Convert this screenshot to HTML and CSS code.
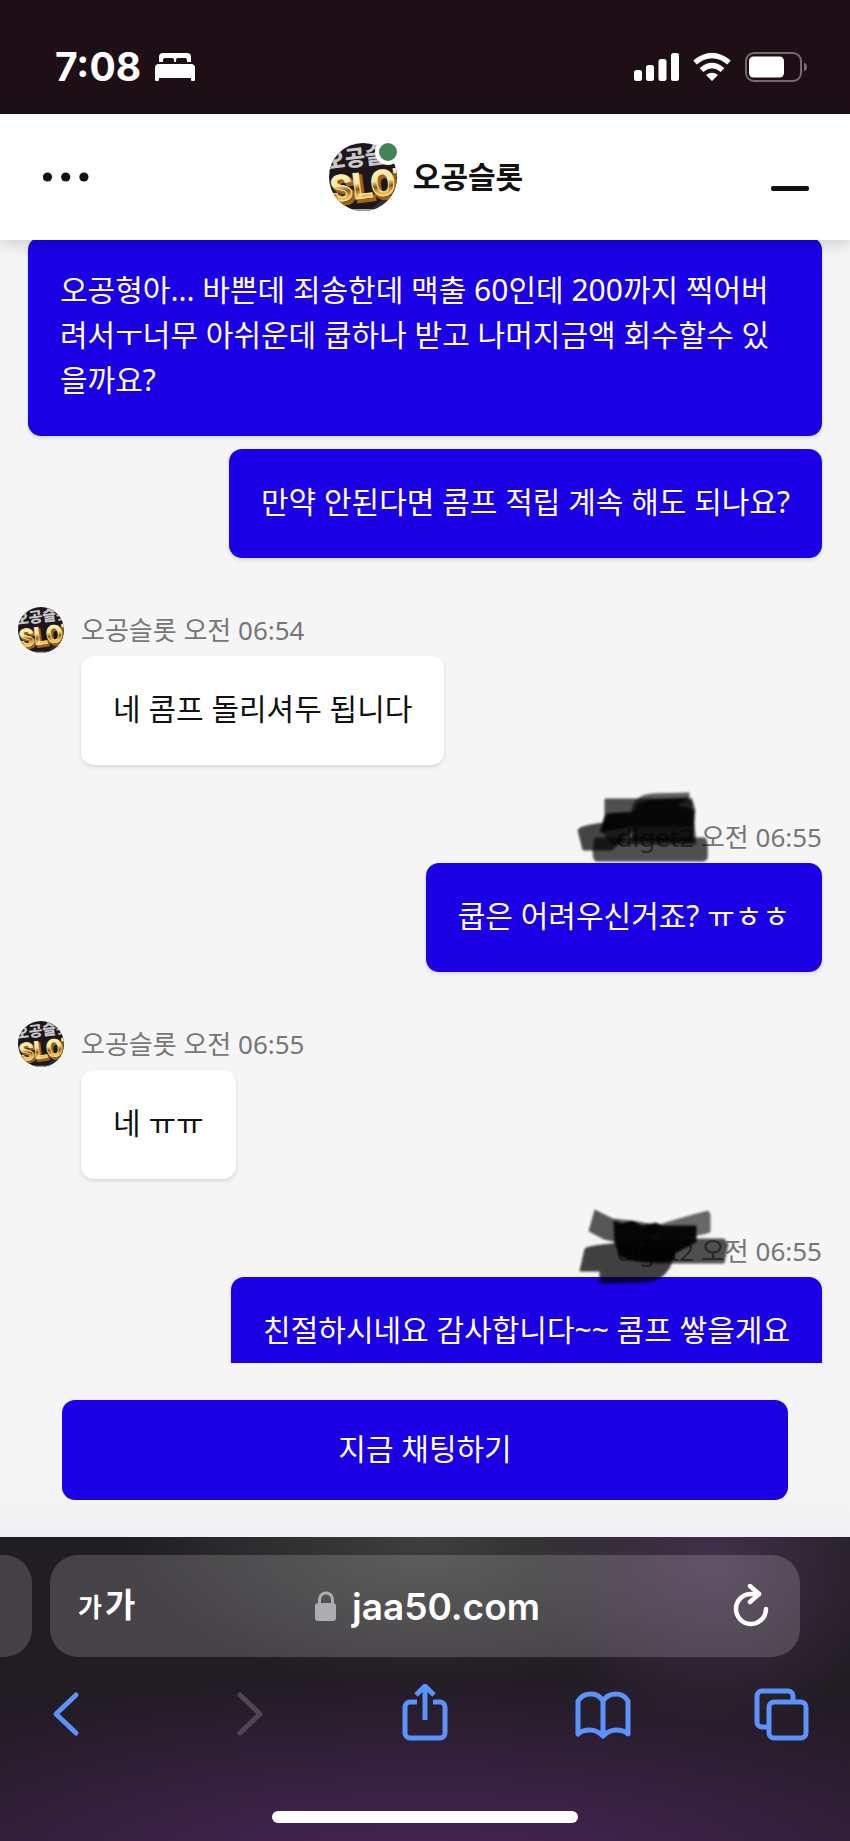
FILE: index.html
```html
<!DOCTYPE html>
<html lang="ko">
<head>
<meta charset="utf-8">
<meta name="viewport" content="width=device-width, initial-scale=1">
<title>오공슬롯</title>
<link rel="stylesheet" href="styles.css">
</head>
<body>
<svg class="defs" aria-hidden="true">
  <defs>
    <linearGradient id="gold" x1="0" y1="0" x2="0" y2="1">
      <stop offset="0" stop-color="#fff6c8"/>
      <stop offset=".42" stop-color="#fbe7a0"/>
      <stop offset=".56" stop-color="#8a5312"/>
      <stop offset=".7" stop-color="#e9b54a"/>
      <stop offset="1" stop-color="#fff0a8"/>
    </linearGradient>
    <clipPath id="round"><circle cx="34" cy="34" r="34"/></clipPath>
    <symbol id="logo" viewBox="0 0 68 68">
      <g clip-path="url(#round)">
        <rect width="68" height="68" fill="#1d171b"/>
        <path d="M40 68 68 44V68z" fill="#30302c"/>
        <path d="M0 30 14 2 0 0z" fill="#3b3a3d"/>
        <g transform="rotate(-7 34 34)">
          <text class="logo-top" x="-2" y="22">오공슬롯</text>
          <text class="logo-shade" x="2" y="58">SLOT</text>
          <text class="logo-word" x="0" y="55">SLOT</text>
        </g>
        <path d="M14 66H54V68H14z" fill="#aaa"/>
      </g>
    </symbol>
  </defs>
</svg>

<div class="status">
  <div class="status-side">
    <span class="clock">7:08</span>
    <svg width="40" height="30" viewBox="0 0 40 30" fill="#fff" aria-hidden="true">
      <path d="M4 10V5a4 4 0 0 1 4-4H32a4 4 0 0 1 4 4V10H32V8a2 2 0 0 0-2-2H23a2 2 0 0 0-2 2V10H19V8a2 2 0 0 0-2-2H10a2 2 0 0 0-2 2V10z"/>
      <path d="M0 28V16a4 4 0 0 1 4-4H36a4 4 0 0 1 4 4V28a1 1 0 0 1-1 1H37a1 1 0 0 1-1-1V26H4V28a1 1 0 0 1-1 1H1a1 1 0 0 1-1-1z"/>
    </svg>
  </div>
  <div class="status-side">
    <svg width="45" height="30" viewBox="0 0 45 30" fill="#fff" aria-hidden="true">
      <rect y="18" width="8" height="11" rx="2.5"/><rect x="12" y="13" width="8" height="16" rx="2.5"/><rect x="24.500" y="7" width="8" height="22" rx="2.500"/><rect x="37" y="1" width="8" height="28" rx="2.500"/>
    </svg>
    <svg width="38" height="30" viewBox="0 0 38 30" fill="none" stroke="#fff" stroke-width="5.500" aria-hidden="true">
      <path d="M2 10.500Q19-3.500 36 10.500"/><path d="M8.500 18Q19 9 29.500 18"/>
      <path d="M13 23Q19 18.500 25 23L19 29z" fill="#fff" stroke="none"/>
    </svg>
    <svg width="62" height="30" viewBox="0 0 62 30" aria-hidden="true">
      <rect x="1" y="1" width="55" height="28" rx="8" fill="none" stroke="#77696f" stroke-width="2"/>
      <rect x="4" y="4.500" width="35" height="21" rx="4.500" fill="#fff"/>
      <path d="M59 10.500Q62 12 62 15T59 19.500z" fill="#77696f"/>
    </svg>
  </div>
</div>

<header class="header">
  <button class="icon-button" type="button" aria-label="메뉴">
    <svg width="46" height="46" viewBox="0 0 46 46" fill="#111"><circle cx="4.500" cy="23" r="4.600"/><circle cx="22.700" cy="23" r="4.600"/><circle cx="40.900" cy="23" r="4.600"/></svg>
  </button>
  <div class="brand">
    <span class="brand-avatar">
      <svg width="68" height="68"><use href="#logo"/></svg>
      <i class="online"></i>
    </span>
    <h1 class="brand-name">오공슬롯</h1>
  </div>
  <button class="icon-button icon-end" type="button" aria-label="최소화">
    <svg width="38" height="46" viewBox="0 0 38 46"><rect y="32" width="38" height="5" rx="2" fill="#111"/></svg>
  </button>
</header>

<main class="chat">
  <section class="group mine">
    <p class="bubble">오공형아... 바쁜데 죄송한데 맥출 60인데 200까지 찍어버려서ㅜ너무 아쉬운데 쿱하나 받고 나머지금액 회수할수 있을까요?</p>
    <p class="bubble next">만약 안된다면 콤프 적립 계속 해도 되나요?</p>
  </section>

  <section class="group">
    <div class="meta"><svg class="avatar" width="46" height="46"><use href="#logo"/></svg><span>오공슬롯 오전 06:54</span></div>
    <p class="bubble">네 콤프 돌리셔두 됩니다</p>
  </section>

  <section class="group mine">
    <div class="meta"><span>diget2 오전 06:55</span>
      <svg class="marker marker-a" width="140" height="74" viewBox="0 0 140 74" aria-hidden="true">
        <path d="M33 9H120V36H30L33 26z" opacity=".68"/>
        <path d="M59 25Q60 5 80 4L117 3V8L121 13 123 20 122 32 124 54H40L31 43Q32 25 42 23z" opacity=".62"/>
        <path d="M34 24 62 22Q65 10 82 10L116 8 104 16 122 20 121 52 60 50 62 36 28 42z" opacity=".8"/>
        <path d="M6 40Q7 36 32 33L64 38 40 60H11z" opacity=".72"/>
        <path d="M23 48H133Q136 50 135 69L132 71H24Q21 70 21 60z" opacity=".68"/>
      </svg>
    </div>
    <p class="bubble">쿱은 어려우신거죠? ㅠㅎㅎ</p>
  </section>

  <section class="group">
    <div class="meta"><svg class="avatar" width="46" height="46"><use href="#logo"/></svg><span>오공슬롯 오전 06:55</span></div>
    <p class="bubble">네 ㅠㅠ</p>
  </section>

  <section class="group mine">
    <div class="meta"><span>diget2 오전 06:55</span>
      <svg class="marker marker-b" width="160" height="80" viewBox="0 0 160 80" aria-hidden="true">
        <path d="M23 4Q30 8 41 13L66 16 88 20 75 38Q50 38 32 33L17 25z" opacity=".65"/>
        <path d="M72 24Q98 15 136 5L138 8 138 26Q128 30 92 33z" opacity=".58"/>
        <path d="M42 15 50 18 60 15 70 20 84 17 90 20H124V36L103 47 101 54Q70 60 48 50L43 37z" opacity=".94"/>
        <path d="M70 33H152L156 38 152 57H84z" opacity=".68"/>
        <path d="M13 43Q14 40 50 37L102 44Q101 66 84 74 74 77 28 77V65H8z" opacity=".74"/>
      </svg>
    </div>
    <p class="bubble">친절하시네요 감사합니다~~ 콤프 쌓을게요</p>
  </section>
</main>

<div class="action">
  <button class="start" type="button">지금 채팅하기</button>
</div>

<footer class="browser">
  <div class="tabs">
    <div class="tab-previous"></div>
    <div class="address">
      <button class="text-size" type="button" aria-label="텍스트 크기"><small>가</small>가</button>
      <a class="url" href="#">
        <svg width="22" height="32" viewBox="0 0 22 32" aria-hidden="true"><path d="M4.500 14V9.500a6.500 6.500 0 0 1 13 0V14" fill="none" stroke="#aeacb3" stroke-width="3"/><rect y="13" width="21" height="18" rx="3" fill="#aeacb3"/></svg>
        jaa50.com
      </a>
      <button class="icon-button icon-end" type="button" aria-label="새로고침">
        <svg width="36" height="44" viewBox="0 0 36 44" fill="none" stroke="#fff" stroke-width="4.500" stroke-linecap="round" stroke-linejoin="round"><path d="M26 10H19A15 15 0 1 0 33 25"/><path d="M17 2 26 10 17 18"/></svg>
      </button>
    </div>
  </div>
  <nav class="tools">
    <button class="icon-button" type="button" aria-label="뒤로"><svg class="tool" viewBox="0 0 60 60"><path d="M41 11 21 30 41 49"/></svg></button>
    <button class="icon-button" type="button" aria-label="앞으로" disabled><svg class="tool tool-off" viewBox="0 0 60 60"><path d="M26 11 46 30 26 49"/></svg></button>
    <button class="icon-button" type="button" aria-label="공유"><svg class="tool thin" viewBox="0 0 60 60"><path d="M24 18H17a5 5 0 0 0-5 5V49a5 5 0 0 0 5 5H47a5 5 0 0 0 5-5V23a5 5 0 0 0-5-5H40"/><path d="M32 36V2M23 11 32 2 41 11"/></svg></button>
    <button class="icon-button" type="button" aria-label="책갈피"><svg class="tool thin" viewBox="0 0 60 60"><path d="M6 50V17C9 12 14 10 19 10S28 12 31 17C34 12 39 10 44 10S53 12 56 17V50C53 47 49 46 44 46S35 48 31 52C27 48 23 46 18 46S9 47 6 50zM31 17V52"/></svg></button>
    <button class="icon-button" type="button" aria-label="탭"><svg class="tool thin" viewBox="0 0 60 60"><rect x="18" y="18" width="37" height="36" rx="5"/><path d="M42 17V12a5 5 0 0 0-5-5H11a5 5 0 0 0-5 5V38a5 5 0 0 0 5 5H17"/></svg></button>
  </nav>
  <div class="home"></div>
</footer>
</body>
</html>
```

FILE: styles.css
```css
* {
  box-sizing: border-box;
}

body {
  margin: 0;
  height: 100vh;
  display: flex;
  flex-direction: column;
  background: #f5f5f5;
  color: #111;
  font-family: "Noto Sans", "Noto Sans CJK KR", sans-serif;
  font-size: 30px;
  line-height: 45px;
}

h1,
p {
  margin: 0;
}

svg {
  display: block;
}

button {
  font: inherit;
  color: inherit;
  border: 0;
  padding: 0;
  background: none;
}

.defs {
  position: absolute;
  width: 0;
  height: 0;
}

.logo-top {
  font: 900 22px "Noto Sans CJK KR", sans-serif;
  fill: #c9c9cc;
}

.logo-word,
.logo-shade {
  font: 700 36px "Liberation Sans Narrow", Roboto, sans-serif;
  fill: url(#gold);
  stroke: #fbe9a8;
  stroke-width: 1;
}

.logo-shade {
  fill: #8a5514;
  stroke: #9b661c;
  stroke-width: 3;
}

.status {
  flex: none;
  height: 114px;
  padding: 20px 43px 0 55px;
  display: flex;
  align-items: center;
  justify-content: space-between;
  background: #1e0f16;
  color: #fff;
}

.status-side {
  display: flex;
  align-items: center;
  gap: 14px;
}

.clock {
  font: 700 39px/46px Inter, sans-serif;
}

.header {
  flex: none;
  position: relative;
  z-index: 2;
  height: 126px;
  padding: 0 41px 0 43px;
  display: grid;
  grid-template-columns: 1fr auto 1fr;
  align-items: center;
  background: #fff;
  box-shadow: 0 2px 16px rgba(0, 0, 0, .2);
}

.icon-button {
  justify-self: start;
}

.icon-end {
  justify-self: end;
}

.brand {
  display: flex;
  align-items: center;
  gap: 16px;
}

.brand-avatar {
  position: relative;
}

.online {
  position: absolute;
  top: -4px;
  right: -4px;
  width: 26px;
  height: 26px;
  border: 4px solid #fff;
  border-radius: 50%;
  background: #43845a;
}

.brand-name {
  padding-bottom: 2px;
  font-size: 30px;
  font-weight: 700;
}

.chat {
  flex: 1;
  min-height: 0;
  margin-top: -3px;
  padding: 0 28px 0 81px;
  overflow: hidden;
}

.group {
  display: flex;
  flex-direction: column;
  align-items: flex-start;
  margin-bottom: 49px;
}

.mine {
  align-items: flex-end;
  margin-left: -53px;
}

.meta {
  position: relative;
  z-index: 1;
  display: flex;
  align-items: center;
  height: 46px;
  margin-bottom: 3px;
  font-size: 26px;
  color: #767676;
}

.avatar {
  position: absolute;
  right: 100%;
  top: 0;
  margin-right: 17px;
}

.bubble {
  padding: 30px 32px 34px;
  border-radius: 13px;
  background: #fff;
  box-shadow: 0 2px 4px rgba(0, 0, 40, .12);
}

.mine .bubble {
  background: #1b00e6;
  color: #fff;
}

.next {
  margin-top: 13px;
}

.marker {
  position: absolute;
  fill: #000;
  filter: blur(1px);
}

.marker path {
  stroke: #000;
  stroke-width: 1;
  stroke-linejoin: round;
}

.marker-a {
  top: -24px;
  right: 110px;
}

.marker-b {
  top: -22px;
  right: 90px;
}

.action {
  flex: none;
  padding: 37px 62px;
  background: linear-gradient(#f5f5f5 70%, #f1f1f4);
}

.start {
  width: 100%;
  height: 100px;
  padding-bottom: 3px;
  border-radius: 13px;
  background: #1b00e6;
  color: #fff;
}

.browser {
  flex: none;
  padding: 18px 0;
  background:
    radial-gradient(ellipse 180px 170px at 84% 8%, rgba(76, 52, 86, .8), transparent),
    radial-gradient(ellipse 300px 150px at 50% 0, #3e3f3e, transparent),
    radial-gradient(ellipse 720px 190px at 50% 108%, #482558, transparent),
    linear-gradient(#211e22, #231a25);
}

.tabs {
  display: flex;
  gap: 18px;
  padding-right: 50px;
}

.tab-previous {
  width: 32px;
  border-radius: 0 28px 28px 0;
  background: rgba(255, 255, 255, .16);
}

.address {
  flex: 1;
  height: 102px;
  padding: 0 31px 0 28px;
  display: grid;
  grid-template-columns: 1fr auto 1fr;
  align-items: center;
  border-radius: 28px;
  background: rgba(255, 255, 255, .17);
  color: #fff;
}

.text-size {
  justify-self: start;
  font-size: 33px;
  font-weight: 700;
}

.text-size small {
  margin-right: 3px;
  font-size: 26px;
}

.url {
  display: flex;
  align-items: center;
  gap: 15px;
  padding-left: 8px;
  color: #fff;
  text-decoration: none;
  font: 600 37px/45px Inter, sans-serif;
}

.tools {
  display: flex;
  justify-content: space-between;
  padding: 27px 39px 0 35px;
}

.tool {
  width: 60px;
  height: 60px;
  fill: none;
  stroke: #5b93fa;
  stroke-width: 5;
  stroke-linecap: round;
  stroke-linejoin: round;
}

.thin {
  stroke-width: 5;
  stroke-linecap: butt;
}

.tool-off {
  stroke: #4d4752;
}

.home {
  width: 36%;
  height: 12px;
  margin: 67px auto 0;
  border-radius: 6px;
  background: #fff;
}
```
